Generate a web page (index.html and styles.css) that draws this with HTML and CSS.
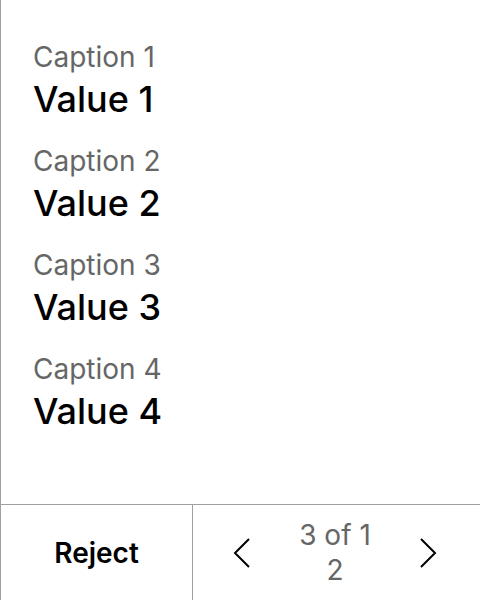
FILE: index.html
```html
<!DOCTYPE html>
<html>
<head>
<meta charset="utf-8">
<link rel="stylesheet" href="styles.css">
</head>
<body>
<div class="card">
  <div class="fields">
    <div class="field"><div class="caption">Caption 1</div><div class="value">Value 1</div></div>
    <div class="field"><div class="caption">Caption 2</div><div class="value">Value 2</div></div>
    <div class="field"><div class="caption">Caption 3</div><div class="value">Value 3</div></div>
    <div class="field"><div class="caption">Caption 4</div><div class="value">Value 4</div></div>
  </div>
  <div class="actions">
    <button class="reject">Reject</button>
    <div class="pager">
      <button class="nav" aria-label="Previous"><svg width="18" height="32" viewBox="0 0 18 32"><path d="M16 2 L2 16 L16 30" fill="none" stroke="#000" stroke-width="2"/></svg></button>
      <div class="count">3 of 12</div>
      <button class="nav" aria-label="Next"><svg width="18" height="32" viewBox="0 0 18 32"><path d="M2 2 L16 16 L2 30" fill="none" stroke="#000" stroke-width="2"/></svg></button>
    </div>
  </div>
</div>
</body>
</html>
```
FILE: styles.css
```css
html, body { margin: 0; padding: 0; background: #fff; }
body { font-family: Inter, "Noto Sans", sans-serif; }
.card {
  width: 480px; height: 600px; box-sizing: border-box;
  border-left: 1px solid #a0a0a0;
  display: flex; flex-direction: column;
}
.fields { flex: 1; padding: 38px 32px 0; display: flex; flex-direction: column; gap: 21px; }
.field { display: flex; flex-direction: column; }
.caption { font-size: 28px; line-height: 39px; color: #666; }
.value { font-size: 36px; line-height: 44px; color: #000; font-weight: 500; }
.actions { height: 96px; box-sizing: border-box; border-top: 1px solid #a0a0a0; display: flex; }
button { font-family: inherit; background: none; border: 0; padding: 0; cursor: pointer; color: #000; }
.reject { width: 192px; border-right: 1px solid #a0a0a0; font-size: 28px; font-weight: 600; }
.pager { flex: 1; display: flex; align-items: center; justify-content: center; gap: 44px; padding-right: 3px; }
.nav { width: 18px; height: 32px; display: flex; align-items: center; justify-content: center; }
.count { width: 80px; text-align: center; font-size: 28px; line-height: 35px; color: #666; word-break: break-all; }
```
